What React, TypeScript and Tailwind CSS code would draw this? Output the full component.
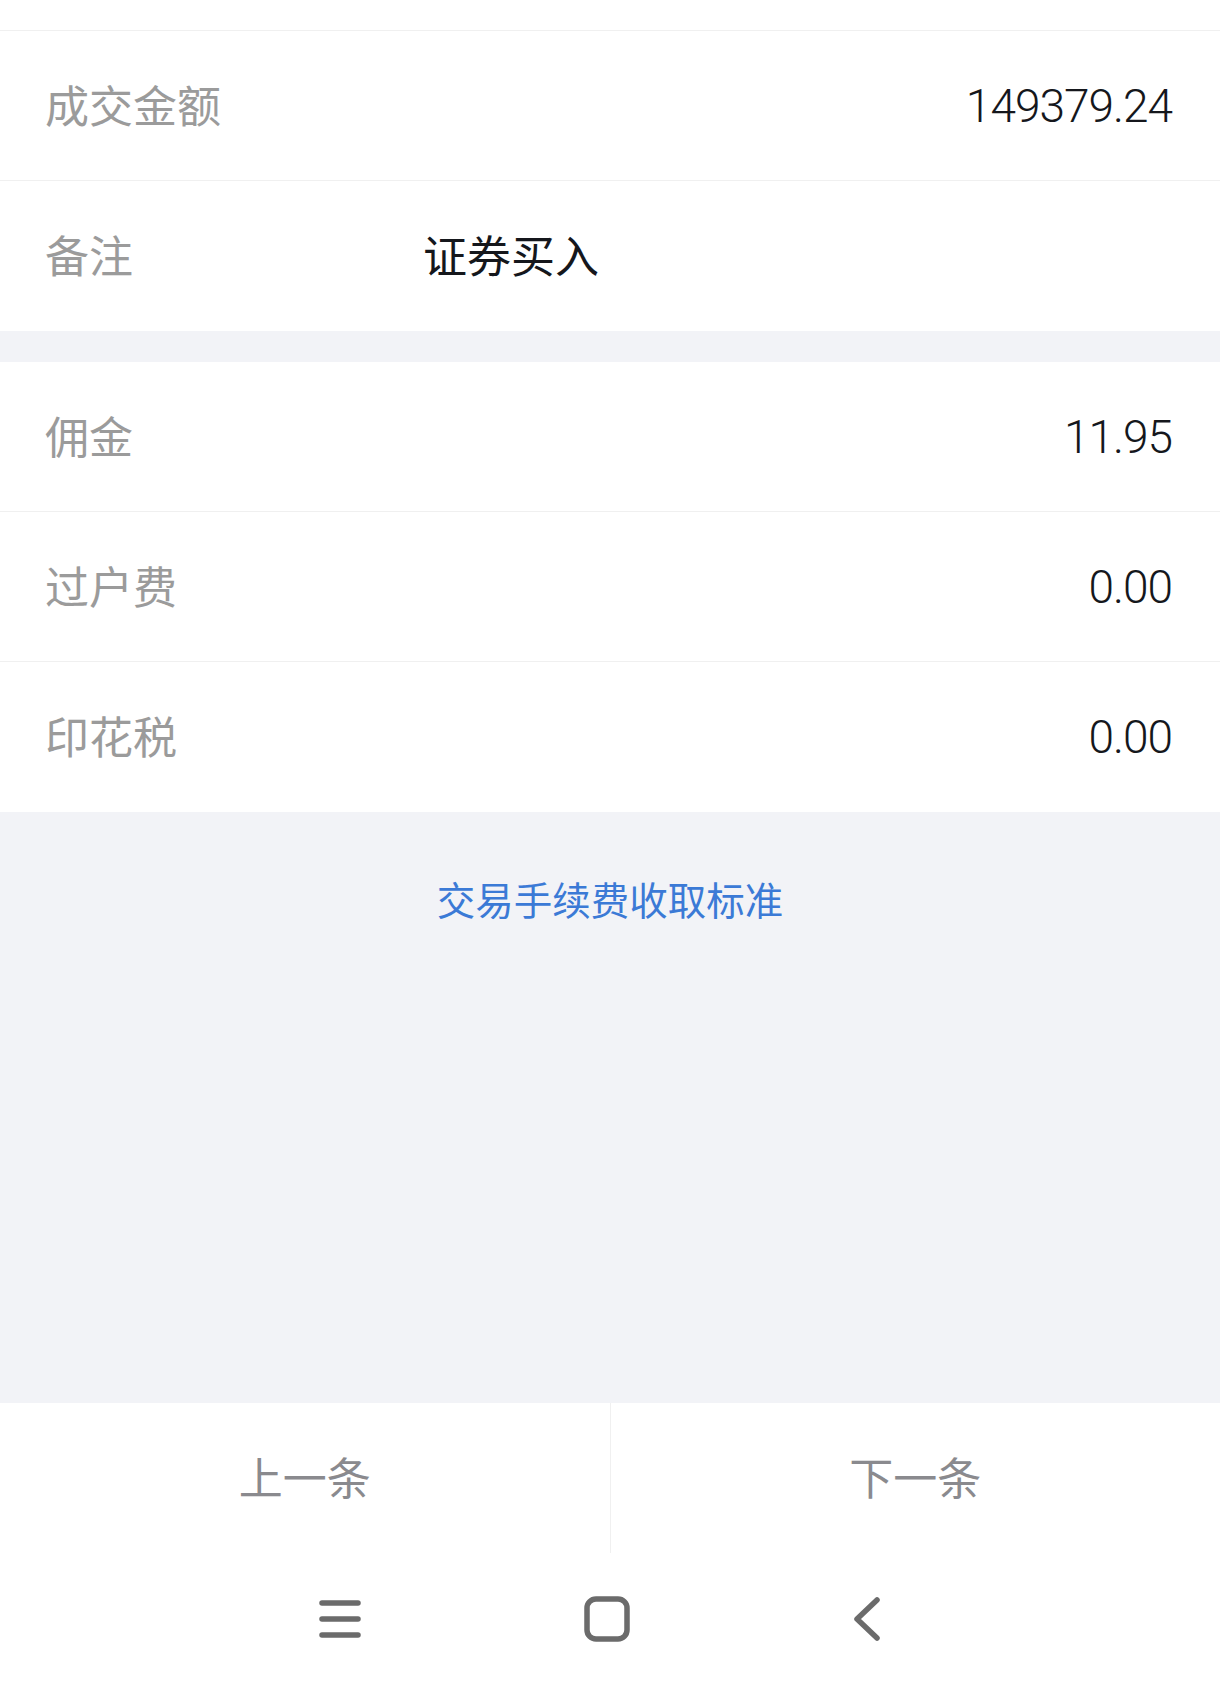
import React from 'react';

const cjk = '"Noto Sans CJK SC", "Noto Sans", sans-serif';
const num = 'Roboto, "Noto Sans CJK SC", sans-serif';

type Row = { label: string; value: string; align?: 'right' | 'left'; last?: boolean };

const DetailRow: React.FC<Row> = ({ label, value, align = 'right', last }) => (
    <div
        className={`h-[150px] flex items-center pl-[45px] pr-[48px] bg-white ${last ? '' : 'border-b border-[#f0f0f0]'}`}
    >
        <span className="text-[44px] text-[#9b9b9b] leading-none w-[378px] shrink-0 pb-[4px]" style={{ fontFamily: cjk }}>
            {label}
        </span>
        {align === 'right' ? (
            <span
                className="ml-auto text-[46px] font-light text-[#15171c] leading-none tracking-[-1px]"
                style={{ fontFamily: num }}
            >
                {value}
            </span>
        ) : (
            <span className="text-[44px] text-[#15171c] leading-none pb-[4px]" style={{ fontFamily: cjk }}>
                {value}
            </span>
        )}
    </div>
);

const App: React.FC = () => {
    return (
        <div className="w-[1220px] h-[1695px] flex flex-col bg-white overflow-hidden">
            {/* row above, scrolled out of view */}
            <div className="h-[31px] bg-white border-b border-[#f0f0f0]" />

            <DetailRow label="成交金额" value="149379.24" />
            <DetailRow label="备注" value="证券买入" align="left" last />

            <div className="h-[31px] bg-[#f2f3f7]" />

            <DetailRow label="佣金" value="11.95" />
            <DetailRow label="过户费" value="0.00" />
            <DetailRow label="印花税" value="0.00" last />

            {/* fee link area */}
            <div className="flex-1 bg-[#f2f3f7] flex justify-center pt-[64px]">
                <span className="text-[38.5px] leading-[44px] text-[#3b7ad6]" style={{ fontFamily: cjk }}>
                    交易手续费收取标准
                </span>
            </div>

            {/* prev / next */}
            <div className="h-[150px] flex bg-white">
                <button className="flex-1 flex items-center justify-center border-r border-[#f0f0f0]">
                    <span className="text-[44px] text-[#8a8a8e] leading-none pb-[4px]" style={{ fontFamily: cjk }}>上一条</span>
                </button>
                <button className="flex-1 flex items-center justify-center">
                    <span className="text-[44px] text-[#8a8a8e] leading-none pb-[4px]" style={{ fontFamily: cjk }}>下一条</span>
                </button>
            </div>

            {/* system nav bar */}
            <div className="h-[142px] shrink-0 bg-white flex items-center justify-center gap-[222px] pb-[10px] pr-[20px]">
                <svg width="44" height="44" viewBox="0 0 44 44" className="text-[#6b6b6b]">
                    <line x1="4" y1="6" x2="40" y2="6" stroke="currentColor" strokeWidth="5.5" strokeLinecap="round" />
                    <line x1="4" y1="22" x2="40" y2="22" stroke="currentColor" strokeWidth="5.5" strokeLinecap="round" />
                    <line x1="4" y1="38" x2="40" y2="38" stroke="currentColor" strokeWidth="5.5" strokeLinecap="round" />
                </svg>
                <svg width="46" height="46" viewBox="0 0 46 46" className="text-[#6b6b6b]">
                    <rect x="3" y="3" width="40" height="40" rx="9" fill="none" stroke="currentColor" strokeWidth="5.5" />
                </svg>
                <svg width="30" height="46" viewBox="0 0 30 46" className="text-[#6b6b6b]">
                    <polyline
                        points="25,4 5,23 25,42"
                        fill="none"
                        stroke="currentColor"
                        strokeWidth="5.5"
                        strokeLinecap="round"
                        strokeLinejoin="round"
                    />
                </svg>
            </div>
        </div>
    );
};

export default App;
